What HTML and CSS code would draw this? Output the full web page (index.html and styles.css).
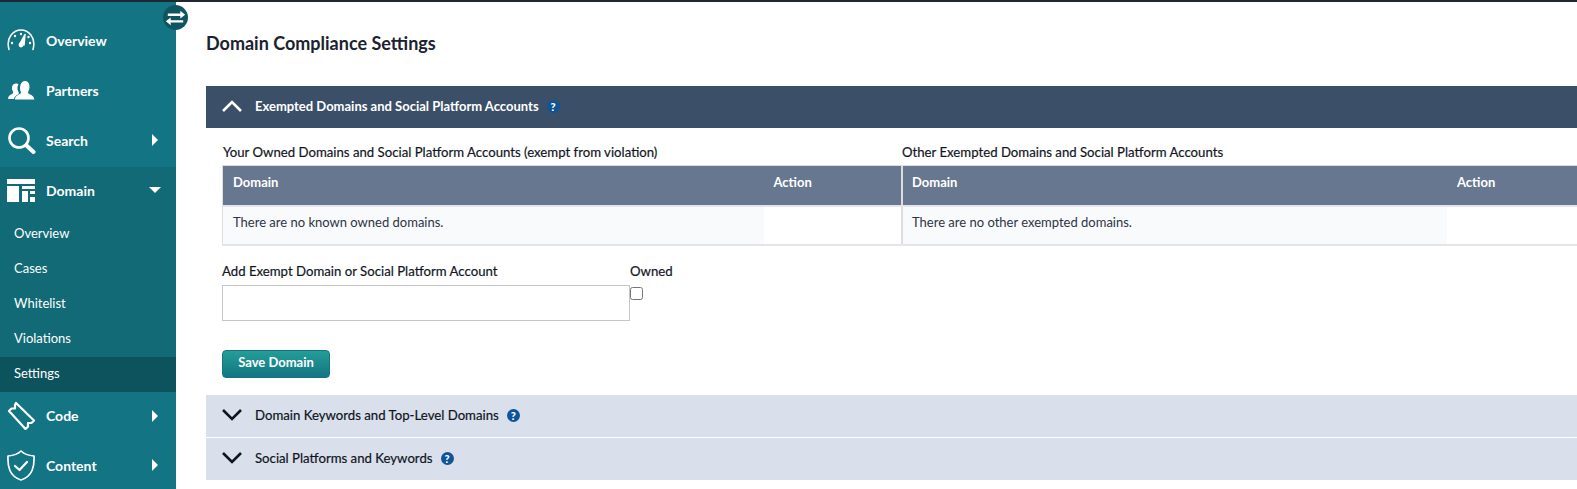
FILE: index.html
```html
<!DOCTYPE html>
<html lang="en">
<head>
<meta charset="utf-8">
<title>Domain Compliance Settings</title>
<link rel="stylesheet" href="styles.css">
</head>
<body>
<div class="topline"></div>
<div class="app">
  <nav class="sidebar">
    <button class="toggle" aria-label="Toggle menu">
      <svg viewBox="0 0 26 26" width="26" height="26" fill="#fff"><path d="M5 8.300h13V5.500l5 4-5 4v-2.700H5zM21 17.800H8v2.700l-5-4 5-4v2.800h13z"/></svg>
    </button>
    <a class="item first">
      <span class="ico"><svg viewBox="1 0 30 24" width="30" height="24" fill="none" stroke="#fff" stroke-width="1.500"><path d="M3 21.500C-.5 9 8 2 15 2s15.500 7 12 19.500" stroke-linecap="round"/><path d="M14 15.500l5-9-1 10.500z" fill="#fff" stroke-linejoin="round"/><circle cx="15" cy="17" r="2.400" fill="#fff" stroke="none"/><g fill="#fff" stroke="none"><circle cx="6" cy="15" r="1.200"/><circle cx="9" cy="8" r="1.200"/><circle cx="15" cy="6" r="1.200"/><circle cx="24" cy="15" r="1.200"/><circle cx="22.500" cy="9" r="1.200"/></g></svg></span>
      <span class="label">Overview</span>
    </a>
    <a class="item">
      <span class="ico"><svg viewBox="0 0 28 22" width="28" height="22" fill="#fff"><path d="M1 20c0-3 2-4 4-5 1.500-.8 1.500-2 .5-3.500C4.500 10 4.500 5 8.500 4.500c1.500-.2 2.500.3 3 1-1.500 2-1.500 5 0 7.500.5 1 .5 2-.5 2.500-2 1-4 2.500-4 4.500z"/><path d="M8 20.500c0-3 2.500-4.500 4.700-5.500 1.600-.8 1.600-2 .6-3.600C12.800 9 13 2 18 2s5.200 7 3.700 9.400c-1 1.600-1 2.800.6 3.600 2.200 1 5 2.500 5 5.500z"/></svg></span>
      <span class="label">Partners</span>
    </a>
    <a class="item">
      <span class="ico"><svg viewBox="0 0 29 29" width="29" height="29" fill="none" stroke="#fff"><circle cx="12" cy="12" r="9.500" stroke-width="2.600"/><path d="M19.500 19.500l7 6.500" stroke-width="4" stroke-linecap="round"/></svg></span>
      <span class="label">Search</span>
      <span class="caret-right"></span>
    </a>
    <div class="group">
      <a class="item open">
        <span class="ico"><svg viewBox="0 0 28 23" width="28" height="23" fill="#fff"><path d="M0 0h28v5H0zM0 7h12v16H0zM15 7h13v3H15zM15 12h6v11h-6zM23 12h5v3h-5zM23 18h5v5h-5z"/></svg></span>
        <span class="label">Domain</span>
        <span class="caret-down"></span>
      </a>
      <a class="sub">Overview</a>
      <a class="sub">Cases</a>
      <a class="sub">Whitelist</a>
      <a class="sub tall">Violations</a>
      <a class="sub active">Settings</a>
    </div>
    <a class="item code">
      <span class="ico"><svg viewBox="0 0 29 29" width="29" height="29" fill="none" stroke="#fff" stroke-width="2.200" stroke-linejoin="round"><path d="M9 2l18 17.500-2.500 2.500H21v3.500L18.500 28 2 10l2.500-2.500H8V4z"/></svg></span>
      <span class="label">Code</span>
      <span class="caret-right"></span>
    </a>
    <a class="item">
      <span class="ico"><svg viewBox="0 0 28 31" width="28" height="31" fill="none" stroke="#fff" stroke-width="1.700" stroke-linejoin="round" stroke-linecap="round"><path d="M14 1c3 3 8 4.500 13 5 .5 10-1 20-13 24C2 26 .5 16 1 6c5-.5 10-2 13-5z"/><path d="M8 16l4.500 4L20 12" stroke-width="2.200"/></svg></span>
      <span class="label">Content</span>
      <span class="caret-right"></span>
    </a>
  </nav>
  <main class="main">
    <h1 class="title">Domain Compliance Settings</h1>
    <section class="panel-head dark">
      <svg class="chev" viewBox="0 0 20 12" width="20" height="12" fill="none" stroke="#fff" stroke-width="2.600"><path d="M1 11l9-9 9 9"/></svg>
      <span class="panel-title strong">Exempted Domains and Social Platform Accounts</span>
      <span class="help small">?</span>
    </section>
    <div class="panel-body">
      <div class="tables">
        <div class="tblcol">
          <h2 class="tbl-title">Your Owned Domains and Social Platform Accounts (exempt from violation)</h2>
          <table class="tbl left">
            <thead><tr><th class="col-domain-left">Domain</th><th>Action</th></tr></thead>
            <tbody><tr><td class="cell-empty">There are no known owned domains.</td><td></td></tr></tbody>
          </table>
        </div>
        <div class="tblcol">
          <h2 class="tbl-title">Other Exempted Domains and Social Platform Accounts</h2>
          <table class="tbl right">
            <thead><tr><th class="col-domain-right">Domain</th><th>Action</th></tr></thead>
            <tbody><tr><td class="cell-empty">There are no other exempted domains.</td><td></td></tr></tbody>
          </table>
        </div>
      </div>
      <form class="add-form">
        <div class="field">
          <label class="field-label" for="dom">Add Exempt Domain or Social Platform Account</label>
          <input id="dom" class="text-input" type="text">
        </div>
        <div class="field">
          <label class="field-label" for="own">Owned</label>
          <input id="own" class="check" type="checkbox">
        </div>
      </form>
      <button class="save" type="button">Save Domain</button>
    </div>
    <section class="panel-head light">
      <svg class="chev" viewBox="0 0 20 12" width="20" height="12" fill="none" stroke="#10141c" stroke-width="2.600"><path d="M1 1l9 9 9-9"/></svg>
      <span class="panel-title">Domain Keywords and Top-Level Domains</span>
      <span class="help">?</span>
    </section>
    <section class="panel-head light">
      <svg class="chev" viewBox="0 0 20 12" width="20" height="12" fill="none" stroke="#10141c" stroke-width="2.600"><path d="M1 1l9 9 9-9"/></svg>
      <span class="panel-title">Social Platforms and Keywords</span>
      <span class="help">?</span>
    </section>
  </main>
</div>
</body>
</html>
```

FILE: styles.css
```css
* { box-sizing: border-box; }
html, body { margin: 0; height: 100%; overflow: hidden; background: #fff; }
body { font-family: Lato, "Liberation Sans", sans-serif; font-size: 13px; color: #1b2230; }
.topline { height: 2px; background: #1f2733; }
.app { display: flex; height: 487px; }

.sidebar { position: relative; flex: 0 0 176px; background: #137583; color: #fff; padding-top: 13px; }
.toggle { position: absolute; top: 3px; left: 163px; width: 25px; height: 25px; padding: 0; border: 0; border-radius: 50%; background: #0f5560; display: flex; align-items: center; justify-content: center; z-index: 2; }
.item { display: flex; align-items: center; height: 50px; padding-left: 7px; font-size: 14px; font-weight: 700; }
.ico { flex: 0 0 39px; display: flex; align-items: center; }
.label { flex: 1; }
.caret-right { width: 0; height: 0; margin-right: 18px; border-left: 6px solid #fff; border-top: 6px solid transparent; border-bottom: 6px solid transparent; }
.caret-down { width: 0; height: 0; margin-right: 15px; border-top: 6px solid #fff; border-left: 6px solid transparent; border-right: 6px solid transparent; }
.group { background: #116a76; margin-top: 2px; }
.item.open { height: 48px; padding-bottom: 2px; }
.sub { display: flex; align-items: center; height: 35px; padding-left: 14px; font-size: 13px; }
.sub.tall { height: 37px; padding-bottom: 2px; }
.sub.active { background: #0d535d; padding-bottom: 3px; }
.item.code { height: 48px; padding-bottom: 1px; }

.main { flex: 1; min-width: 0; padding-left: 30px; }
.title { margin: 0; height: 84px; padding-top: 31px; font-size: 18px; line-height: 20px; font-weight: 700; color: #1b2230; }
.panel-head { display: flex; align-items: center; height: 42px; padding: 0 0 2px 16px; }
.panel-head.dark { background: #3b5068; color: #fff; }
.panel-head.light { background: #d9e0ec; color: #10141c; margin-bottom: 1px; }
.chev { flex: 0 0 20px; margin-right: 13px; }
.panel-title { font-size: 13.2px; font-weight: 400; -webkit-text-stroke: .2px currentColor; }
.panel-title.strong { font-size: 13px; font-weight: 700; -webkit-text-stroke: 0; }
.help { display: inline-flex; align-items: center; justify-content: center; width: 13px; height: 13px; margin-left: 8px; border-radius: 50%; background: #0f5596; color: #fff; font-size: 11px; font-weight: 900; }
.help.small { margin-left: 8px; font-size: 11px; }

.panel-body { height: 267px; padding: 16px 0 0 16px; }
.tables { display: grid; grid-template-columns: 679px 1fr; }
.tbl-title { margin: 0; height: 21px; padding-left: 1px; font-size: 13.2px; line-height: 17px; font-weight: 400; -webkit-text-stroke: .2px #1b2230; color: #10141c; }
.tbl { width: 100%; border-collapse: collapse; table-layout: fixed; font-size: 13px; border-top: 1px solid #ddd; border-bottom: 2px solid #e3e5e9; }
.tbl.left { border-left: 1px solid #ddd; }
.tbl.right { border-left: 2px solid #ddd; }
.tbl th { height: 40px; background: #67778f; color: #fff; text-align: left; padding: 0 10px 6px; font-size: 13px; font-weight: 700; border-bottom: 2px solid #e3e5e9; }
.col-domain-left { width: 541px; }
.col-domain-right { width: 545px; }
.tbl.right th:first-child, .tbl.right td:first-child { padding-left: 9px; }
.tbl td { height: 39px; padding: 0 10px 6px; color: #2d3442; }
.cell-empty { background: #f9fafc; }

.add-form { display: flex; margin-top: 17px; }
.field { display: flex; flex-direction: column; align-items: flex-start; }
.field-label { height: 22px; font-size: 13.2px; line-height: 16px; -webkit-text-stroke: .2px #1b2230; color: #10141c; }
.text-input { width: 408px; height: 36px; margin: 0; border: 1px solid #c6c6c6; background: #fff; }
.check { width: 13px; height: 13px; margin: 2px 0 0; }
.save { display: block; width: 108px; height: 28px; margin-top: 29px; padding: 0 0 3px; border: 1px solid #137583; border-radius: 4px; background: linear-gradient(#259d97, #127682); color: #fff; font-family: inherit; font-size: 13px; font-weight: 700; }
```
